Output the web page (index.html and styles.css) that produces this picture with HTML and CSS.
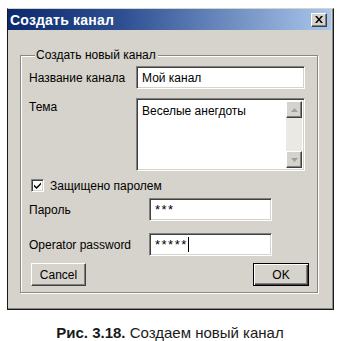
FILE: index.html
```html
<!DOCTYPE html>
<html lang="ru">
<head>
<meta charset="utf-8">
<link rel="stylesheet" href="styles.css">
</head>
<body>
<div class="window">
  <div class="titlebar">
    <span class="title">Создать канал</span>
    <span class="close"><svg width="8" height="7" viewBox="0 0 8 7"><path d="M0 0h2l2 2.5L6 0h2L5 3.5 8 7H6L4 4.5 2 7H0l3-3.5z" fill="#000"/></svg></span>
  </div>
  <fieldset class="group">
    <legend class="legend">Создать новый канал</legend>
    <div class="row">
      <span class="lbl lbl-wide">Название канала</span>
      <div class="field field-long"><span class="val">Мой канал</span></div>
    </div>
    <div class="row row-top">
      <span class="lbl lbl-wide lbl-top">Тема</span>
      <div class="field field-long field-area">
        <span class="val val-area">Веселые анегдоты</span>
        <div class="scrollbar">
          <span class="sb-btn"><svg width="7" height="4" viewBox="0 0 7 4"><path d="M3.5 0L7 4H0z" fill="#a0a0a0"/></svg></span>
          <span class="sb-track"></span>
          <span class="sb-btn"><svg width="7" height="4" viewBox="0 0 7 4"><path d="M0 0h7L3.5 4z" fill="#a0a0a0"/></svg></span>
        </div>
      </div>
    </div>
    <div class="check-row">
      <span class="checkbox"><svg width="9" height="9" viewBox="0 0 9 9"><path d="M1 3.5l2.5 2.5L8 1.5v2L3.5 8 1 5.5z" fill="#000"/></svg></span>
      <span class="check-label">Защищено паролем</span>
    </div>
    <div class="row row-pw">
      <span class="lbl lbl-pw">Пароль</span>
      <div class="field field-pw"><span class="val val-pw">***</span></div>
    </div>
    <div class="row row-op">
      <span class="lbl lbl-pw">Operator password</span>
      <div class="field field-pw"><span class="val val-pw">*****</span><span class="caret"></span></div>
    </div>
    <div class="buttons">
      <span class="btn">Cancel</span>
      <span class="btn btn-default">OK</span>
    </div>
  </fieldset>
</div>
<p class="caption"><b>Рис. 3.18.</b> Создаем новый канал</p>
</body>
</html>
```

FILE: styles.css
```css
html, body {
  margin: 0;
  padding: 0;
  background: #fff;
}
body {
  font-family: "Liberation Sans", Arial, sans-serif;
  font-size: 12px;
  color: #000;
}
.window {
  margin: 8px 0 0 7px;
  width: 327px;
  height: 302px;
  box-sizing: border-box;
  background: #d6d3cc;
  border: 1px solid #1a1a1a;
  border-top-color: #d6d3cc;
  box-shadow: inset -1px -1px 0 #8a8a8a;
  padding: 0 2px 0 0;
  display: flex;
  flex-direction: column;
}
.titlebar {
  height: 21px;
  display: flex;
  align-items: center;
  justify-content: space-between;
  background: linear-gradient(to right, #0c2a6e 0%, #2d4f92 35%, #a9c7ec 100%);
  padding: 0 4px 0 2px;
}
.title {
  color: #fff;
  font-weight: bold;
  font-size: 14px;
  letter-spacing: 0.2px;
}
.close {
  width: 16px;
  height: 14px;
  box-sizing: border-box;
  background: #d6d3cc;
  border: 1px solid;
  border-color: #fff #404040 #404040 #fff;
  box-shadow: inset -1px -1px 0 #808080;
  display: flex;
  align-items: center;
  justify-content: center;
}
.group {
  margin: 18px 0 0 12px;
  width: 298px;
  box-sizing: border-box;
  border: 1px solid #8a8780;
  box-shadow: 1px 1px 0 #fff, inset 1px 1px 0 #fff;
  padding: 4px 8px 6px 8px;
  min-width: 0;
  display: flex;
  flex-direction: column;
}
.legend {
  padding: 0 2px 0 1px;
  margin-left: 6px;
  background: #d6d3cc;
  font-size: 12px;
  line-height: 14px;
}
.row {
  display: flex;
  align-items: center;
}
.row-top {
  align-items: flex-start;
  margin-top: 9px;
}
.row-pw {
  margin-top: 6px;
}
.row-op {
  margin-top: 12px;
}
.lbl-wide {
  width: 107px;
  flex: none;
}
.lbl-pw {
  width: 120px;
  flex: none;
}
.lbl-top {
  padding-top: 2px;
}
.field {
  box-sizing: border-box;
  height: 23px;
  background: #fff;
  border: 1px solid;
  border-color: #808080 #fff #fff #808080;
  box-shadow: inset 1px 1px 0 #404040, inset -1px -1px 0 #d6d3cc;
  display: flex;
  align-items: center;
  padding: 0 4px 0 5px;
}
.field-long {
  width: 169px;
}
.field-area {
  height: 73px;
  align-items: stretch;
  padding: 2px 2px 2px 5px;
}
.val-area {
  flex: 1;
  padding-top: 3px;
}
.field-pw {
  width: 123px;
  align-items: flex-start;
  padding-top: 3px;
}
.val-pw {
  font-size: 13px;
  letter-spacing: 1.5px;
}
.caret {
  width: 1px;
  height: 15px;
  background: #000;
  margin-left: 0;
  margin-top: 0;
}
.scrollbar {
  width: 16px;
  display: flex;
  flex-direction: column;
}
.sb-btn {
  height: 17px;
  box-sizing: border-box;
  background: #d6d3cc;
  border: 1px solid;
  border-color: #fff #404040 #404040 #fff;
  box-shadow: inset -1px -1px 0 #808080;
  display: flex;
  align-items: center;
  justify-content: center;
}
.sb-track {
  flex: 1;
  background: #ebe9e4;
}
.check-row {
  display: flex;
  align-items: center;
  margin: 8px 0 0 2px;
  height: 13px;
}
.checkbox {
  width: 13px;
  height: 13px;
  box-sizing: border-box;
  background: #fff;
  border: 1px solid;
  border-color: #808080 #fff #fff #808080;
  box-shadow: inset 1px 1px 0 #404040, inset -1px -1px 0 #d6d3cc;
  display: flex;
  align-items: center;
  justify-content: center;
}
.check-label {
  margin-left: 6px;
}
.buttons {
  display: flex;
  justify-content: space-between;
  margin: 7px 0 0 2px;
}
.btn {
  box-sizing: border-box;
  width: 55px;
  height: 23px;
  background: #d6d3cc;
  border: 1px solid;
  border-color: #fff #404040 #404040 #fff;
  box-shadow: inset -1px -1px 0 #808080;
  display: flex;
  align-items: center;
  justify-content: center;
  font-size: 12px;
}
.btn-default {
  width: 56px;
  border: 1px solid #000;
  box-shadow: inset 1px 1px 0 #fff, inset -1px -1px 0 #404040, inset -2px -2px 0 #808080;
}
.caption {
  margin: 14px 0 0 0;
  text-align: center;
  font-size: 15px;
  color: #1a1a1a;
}
.caption b {
  font-weight: bold;
}
```
